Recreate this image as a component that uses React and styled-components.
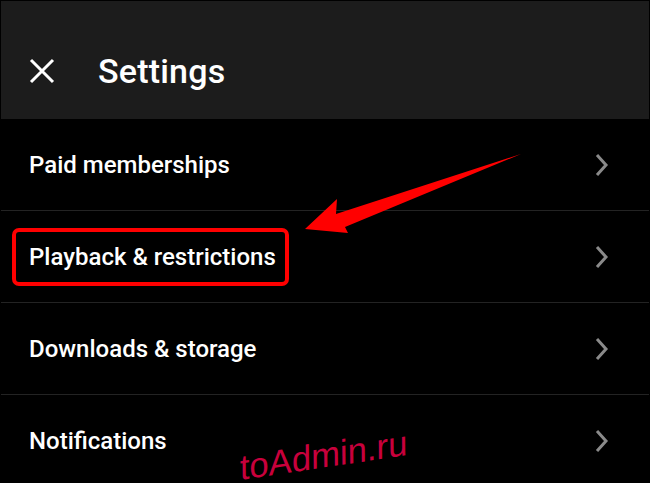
import React from 'react';
import styled, { createGlobalStyle } from 'styled-components';

const GlobalStyle = createGlobalStyle`
  html, body {
    margin: 0;
    padding: 0;
    background: #000;
  }
  body {
    font-family: Roboto, "Noto Sans", sans-serif;
  }
`

const items = [
  'Paid memberships',
  'Playback & restrictions',
  'Downloads & storage',
  'Notifications',
];

function Chevron() {
  return (
    <svg width="14" height="24" viewBox="0 0 14 24">
      <polyline points="2,2 11,12 2,22" fill="none" stroke="#8a8a8a" strokeWidth="3" />
    </svg>
  );
}

function CloseIcon() {
  return (
    <svg width="26" height="26" viewBox="0 0 26 26">
      <path d="M2 2 L24 24 M24 2 L2 24" stroke="#fff" strokeWidth="3" />
    </svg>
  );
}

export default function App() {
  return (
    <Screen>
      <GlobalStyle />
      <Header>
        <IconBtn><CloseIcon /></IconBtn>
        <Title>Settings</Title>
      </Header>
      <List>
        {items.map((label, i) => (
          <Row key={label}>
            <Label $highlighted={i === 1}>{label}</Label>
            <Chevron />
          </Row>
        ))}
      </List>
      <Arrow width="650" height="483" viewBox="0 0 650 483">
        <polygon
          points="305,229 337,199 336,214 521,154 345,227 348,233"
          fill="#ff0000"
        />
      </Arrow>
      <Watermark>toAdmin.ru</Watermark>
    </Screen>
  );
}

const Screen = styled.div`
  position: relative;
  width: 650px;
  height: 483px;
  overflow: hidden;
  background: #000;
  padding: 1px;
  box-sizing: border-box;
`

const Header = styled.div`
  height: 118px;
  box-sizing: border-box;
  padding: 22px 0 0 28px;
  background: #1c1c1c;
  display: flex;
  align-items: center;
`

const IconBtn = styled.div`
  width: 26px;
  height: 26px;
  display: flex;
  margin-right: 43px;
`

const Title = styled.h1`
  margin: 0;
  color: #fff;
  font-size: 34px;
  font-weight: 500;
  letter-spacing: 0.2px;
`

const List = styled.div`
  display: flex;
  flex-direction: column;
`

const Row = styled.div`
  height: 91px;
  display: flex;
  align-items: center;
  justify-content: space-between;
  padding: 0 40px 0 28px;
  border-bottom: 1px solid #232323;
`

const Label = styled.span`
  color: #fff;
  font-size: 24px;
  font-weight: 500;
  line-height: 28px;
  ${p => p.$highlighted && `
    margin-left: -17px;
    padding: 11px 9px 11px 13px;
    border: 4px solid #ff0000;
    border-radius: 7px;
  `}
`

const Arrow = styled.svg`
  position: absolute;
  left: 0;
  top: 0;
  pointer-events: none;
`

const Watermark = styled.div`
  position: absolute;
  left: 240px;
  top: 450px;
  color: #c8003c;
  font-family: "Liberation Sans", sans-serif;
  font-size: 35px;
  line-height: 35px;
  white-space: nowrap;
  transform: rotate(-8.5deg) skewX(-8deg);
  transform-origin: 0 30px;
`
